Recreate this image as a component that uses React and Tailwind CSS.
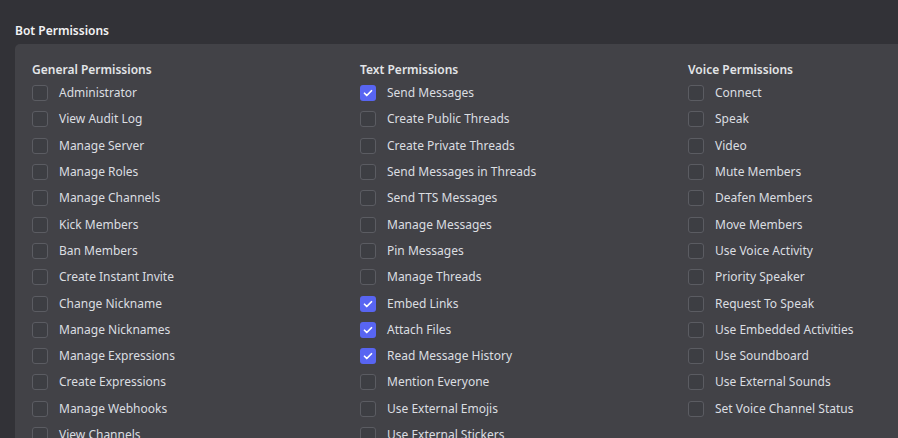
import React from 'react';

const columns = [
  {
    title: 'General Permissions',
    items: [
      ['Administrator', false],
      ['View Audit Log', false],
      ['Manage Server', false],
      ['Manage Roles', false],
      ['Manage Channels', false],
      ['Kick Members', false],
      ['Ban Members', false],
      ['Create Instant Invite', false],
      ['Change Nickname', false],
      ['Manage Nicknames', false],
      ['Manage Expressions', false],
      ['Create Expressions', false],
      ['Manage Webhooks', false],
      ['View Channels', false],
    ],
  },
  {
    title: 'Text Permissions',
    items: [
      ['Send Messages', true],
      ['Create Public Threads', false],
      ['Create Private Threads', false],
      ['Send Messages in Threads', false],
      ['Send TTS Messages', false],
      ['Manage Messages', false],
      ['Pin Messages', false],
      ['Manage Threads', false],
      ['Embed Links', true],
      ['Attach Files', true],
      ['Read Message History', true],
      ['Mention Everyone', false],
      ['Use External Emojis', false],
      ['Use External Stickers', false],
    ],
  },
  {
    title: 'Voice Permissions',
    items: [
      ['Connect', false],
      ['Speak', false],
      ['Video', false],
      ['Mute Members', false],
      ['Deafen Members', false],
      ['Move Members', false],
      ['Use Voice Activity', false],
      ['Priority Speaker', false],
      ['Request To Speak', false],
      ['Use Embedded Activities', false],
      ['Use Soundboard', false],
      ['Use External Sounds', false],
      ['Set Voice Channel Status', false],
    ],
  },
];

const Checkbox = ({ checked }) =>
  checked ? (
    <span className="flex h-4 w-4 shrink-0 items-center justify-center rounded-[3px] bg-[#5865f2]">
      <svg viewBox="0 0 24 24" className="h-3 w-3" fill="none" stroke="white" strokeWidth="3.5" strokeLinecap="round" strokeLinejoin="round">
        <path d="M5 12.5l4.5 4.5L19 7.5" />
      </svg>
    </span>
  ) : (
    <span className="h-4 w-4 shrink-0 rounded-[3px] border border-[#5b5c62] bg-[#3d3e43]" />
  );

export default function App() {
  return (
    <div
      className="h-[438px] w-full overflow-hidden bg-[#323237] pl-[15px] pt-[22px]"
      style={{ fontFamily: '"Noto Sans", "Open Sans", sans-serif' }}
    >
      <h2 className="h-[22px] pt-px text-[12px] font-semibold leading-[16px] text-[#f2f3f5]">Bot Permissions</h2>
      <div className="h-full rounded-tl-[5px] bg-[#424247] pl-[17px] pt-[18px]">
        <div className="grid grid-cols-[328px_328px_1fr]">
          {columns.map((col) => (
            <div key={col.title}>
              <div className="mb-[2px] text-[12px] font-semibold leading-[16px] text-[#e3e5e8]">{col.title}</div>
              <div className="flex flex-col">
                {col.items.map(([label, checked]) => (
                  <label key={label} className="flex h-[26.3px] items-center gap-[11px]">
                    <Checkbox checked={checked} />
                    <span className="text-[12px] leading-[16px] text-[#dbdee1]">{label}</span>
                  </label>
                ))}
              </div>
            </div>
          ))}
        </div>
      </div>
    </div>
  );
}
